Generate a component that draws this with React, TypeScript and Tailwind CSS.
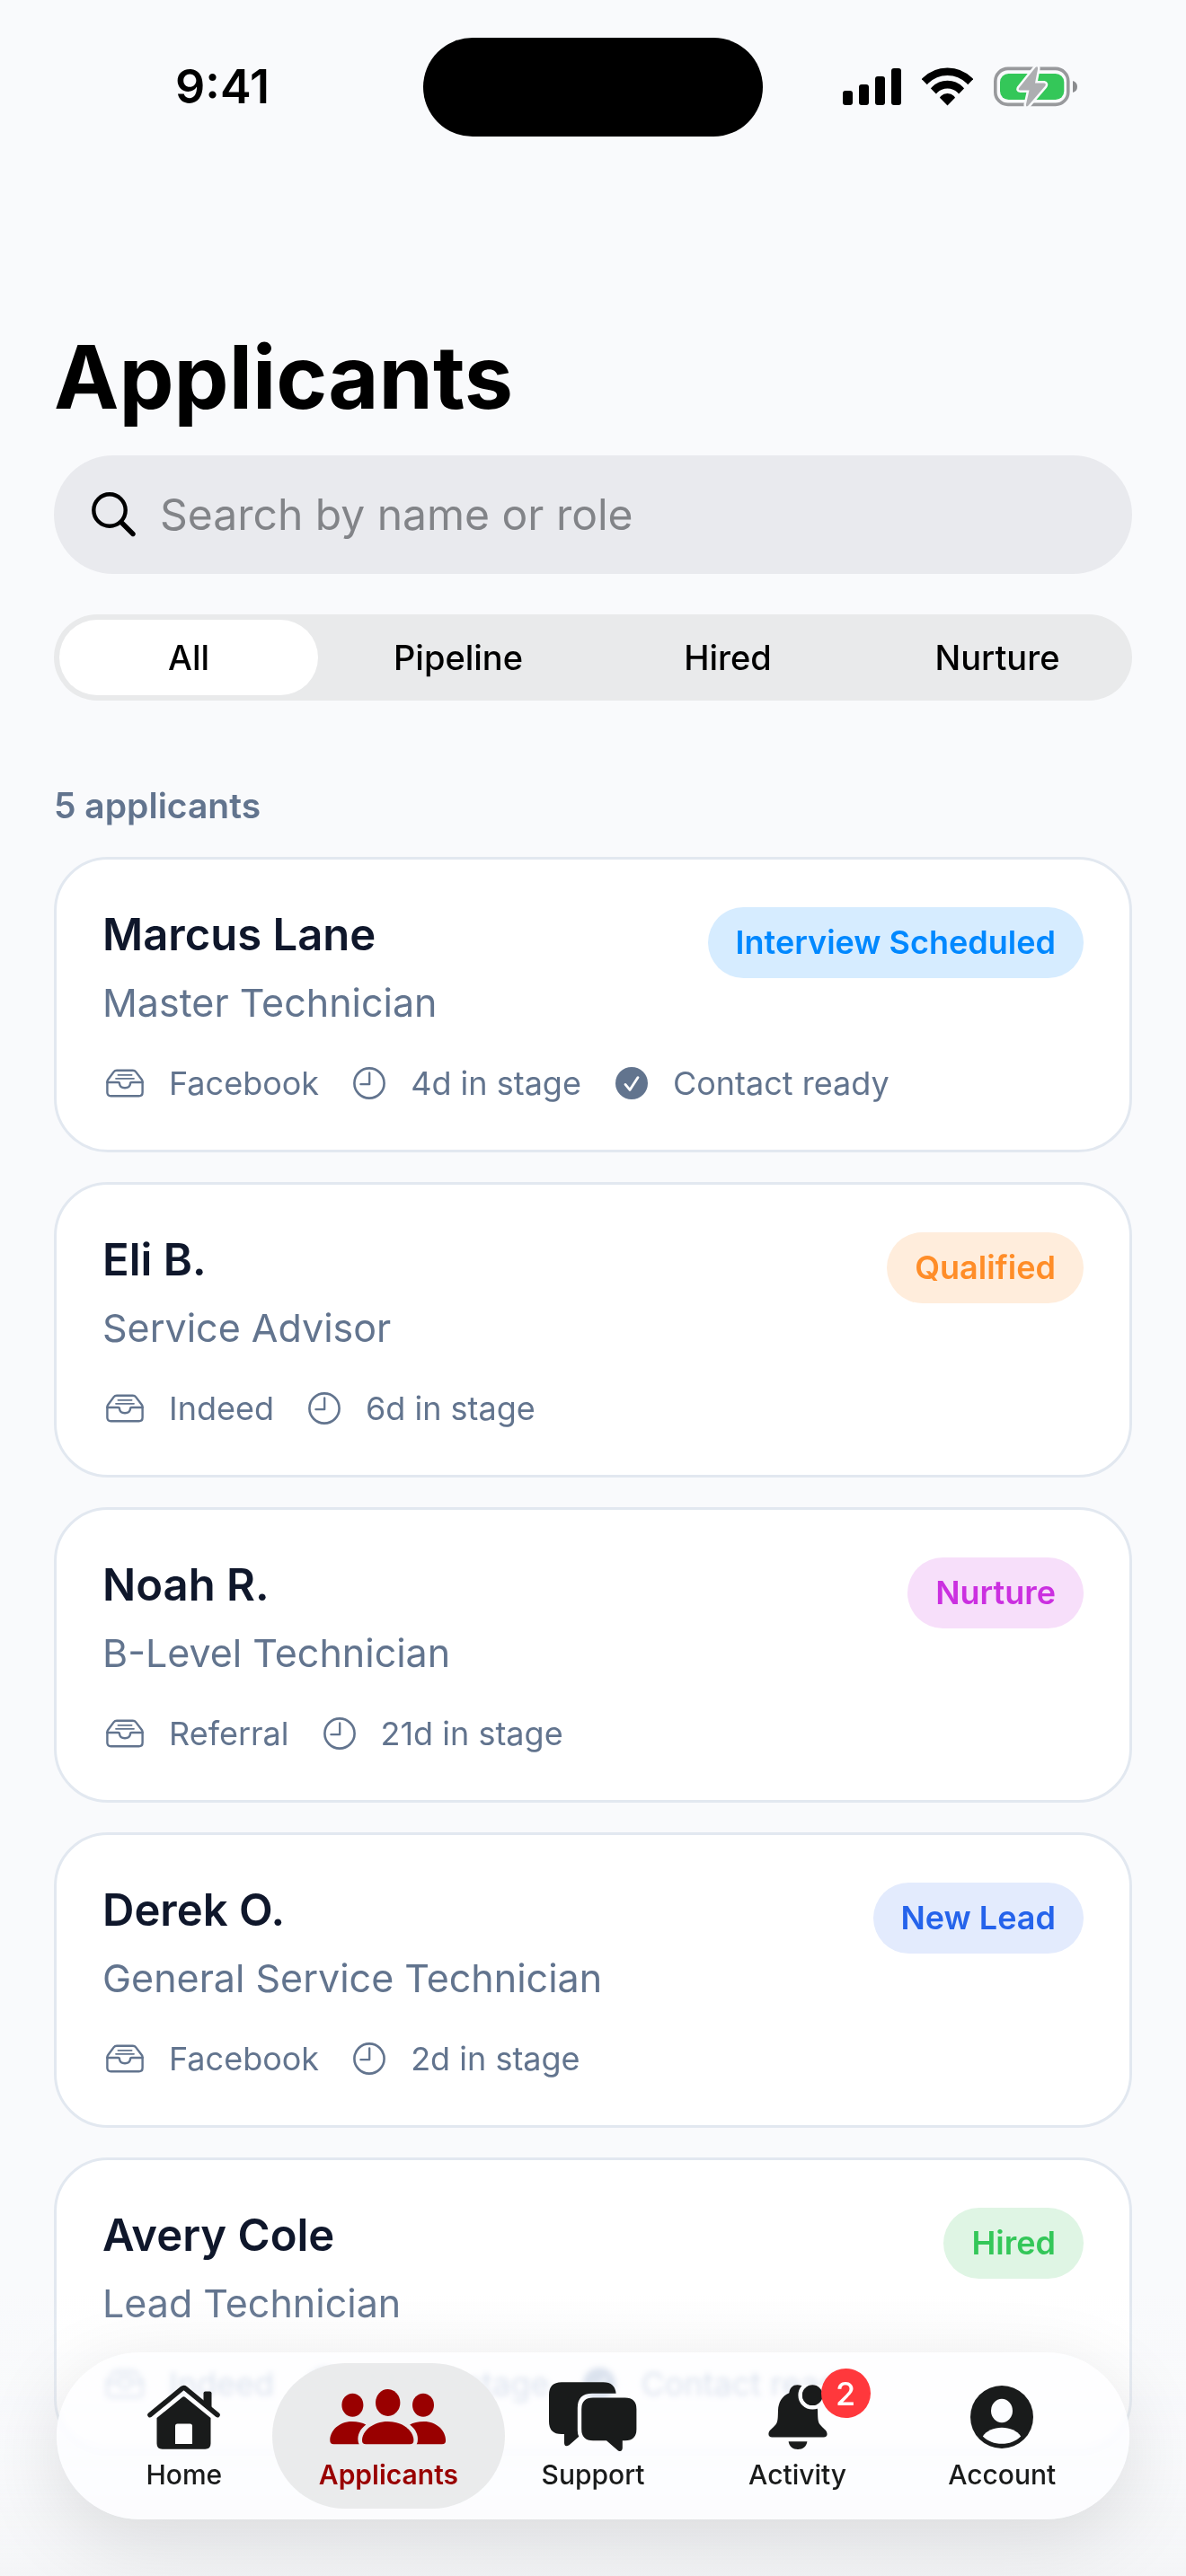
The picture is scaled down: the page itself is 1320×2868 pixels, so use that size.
import { useState, type ReactNode } from "react";
import clsx from "clsx";

type Stage = "Interview Scheduled" | "Qualified" | "Nurture" | "New Lead" | "Hired";
type Filter = "All" | "Pipeline" | "Hired" | "Nurture";

type Applicant = {
  name: string;
  role: string;
  source: string;
  days: number;
  stage: Stage;
  contactReady?: boolean;
};

const FILTERS: Filter[] = ["All", "Pipeline", "Hired", "Nurture"];

const APPLICANTS: Applicant[] = [
  { name: "Marcus Lane", role: "Master Technician", source: "Facebook", days: 4, stage: "Interview Scheduled", contactReady: true },
  { name: "Eli B.", role: "Service Advisor", source: "Indeed", days: 6, stage: "Qualified" },
  { name: "Noah R.", role: "B-Level Technician", source: "Referral", days: 21, stage: "Nurture" },
  { name: "Derek O.", role: "General Service Technician", source: "Facebook", days: 2, stage: "New Lead" },
  { name: "Avery Cole", role: "Lead Technician", source: "Indeed", days: 14, stage: "Hired", contactReady: true },
];

const STAGE_STYLE: Record<Stage, string> = {
  "Interview Scheduled": "bg-[#d6ecff] text-[#0088ff]",
  Qualified: "bg-[#ffeddc] text-[#ff8d28]",
  Nurture: "bg-[#f7dffa] text-[#cb30e0]",
  "New Lead": "bg-[#e3ebfd] text-[#2563eb]",
  Hired: "bg-[#dff5e4] text-[#34c759]",
};

function inFilter(a: Applicant, filter: Filter) {
  if (filter === "All") return true;
  if (filter === "Pipeline") return a.stage !== "Hired" && a.stage !== "Nurture";
  return a.stage === filter;
}

export default function App() {
  const [query, setQuery] = useState("");
  const [filter, setFilter] = useState<Filter>("All");

  const q = query.trim().toLowerCase();
  const visible = APPLICANTS.filter(
    (a) => inFilter(a, filter) && `${a.name} ${a.role}`.toLowerCase().includes(q)
  );

  return (
    <div className="min-h-screen bg-[#f9fafc] pb-32 font-['Inter',sans-serif] text-black">
      <StatusBar />

      <main className="px-[60px] pt-[208px]">
        <h1 className="text-[97px] leading-[120px] font-bold">Applicants</h1>

        <label className="mt-[27px] flex h-[132px] items-center gap-[26px] rounded-full bg-[#e9eaee] px-[42px]">
          <SearchIcon />
          <input
            type="search"
            aria-label="Search applicants"
            placeholder="Search by name or role"
            value={query}
            onChange={(e) => setQuery(e.target.value)}
            className="min-w-0 flex-1 bg-transparent text-[48px] leading-[60px] outline-none placeholder:text-[#828488]"
          />
        </label>

        <div className="mt-[45px] grid h-24 grid-cols-4 rounded-full bg-[#e9eaeb]">
          {FILTERS.map((f) => (
            <button
              key={f}
              type="button"
              aria-pressed={f === filter}
              onClick={() => setFilter(f)}
              className={clsx(
                "m-1.5 rounded-full text-[38px] leading-[48px] font-medium",
                f === filter && "bg-white"
              )}
            >
              {f}
            </button>
          ))}
        </div>

        <p className="mt-[93px] text-[39px] leading-[48px] font-semibold text-slate-500">
          {visible.length} applicants
        </p>

        <ul className="mt-[33px] flex flex-col gap-[33px]">
          {visible.map((a) => (
            <ApplicantCard key={a.name} applicant={a} />
          ))}
        </ul>
      </main>

      {/* Fades the list out behind the tab bar */}
      <div className="pointer-events-none fixed inset-x-0 bottom-0 h-[320px] bg-linear-to-b from-[#f9fafc]/0 via-[#f9fafc]/40 via-60% to-[#f4f5f7]" />
      <TabBar />
    </div>
  );
}

function StatusBar() {
  return (
    <header className="grid grid-cols-[1fr_auto_1fr] items-center pt-[42px]">
      <span className="pl-6 text-center text-[52px] leading-[60px] font-semibold">9:41</span>
      <span className="h-[110px] w-[378px] rounded-full bg-black" />
      <div className="flex items-center justify-center gap-[23px] pr-8">
        <svg className="h-[44px] w-[65px]" viewBox="0 0 65 44" aria-hidden>
          <rect x="0" y="26" width="11" height="16" rx="3" />
          <rect x="18" y="19" width="11" height="23" rx="3" />
          <rect x="36" y="10" width="11" height="32" rx="3" />
          <rect x="54" y="1" width="11" height="41" rx="3" />
        </svg>
        <svg className="h-[44px] w-[57px]" viewBox="0 0 57 44" fill="none" aria-hidden>
          <clipPath id="wifi-wedge">
            <path d="M28.5 42.5 L-8 5 V-5 H65 V5Z" />
          </clipPath>
          <g clipPath="url(#wifi-wedge)" stroke="#000" strokeWidth="8.6">
            <circle cx="28.5" cy="39.3" r="34.6" />
            <circle cx="28.5" cy="39.3" r="20.2" />
            <circle cx="28.5" cy="39.3" r="10.4" fill="#000" stroke="none" />
          </g>
        </svg>
        <svg className="h-[46px] w-[93px]" viewBox="0 0 93 46" aria-hidden>
          <rect x="1.8" y="2.4" width="81" height="40" rx="14" fill="none" stroke="#98999c" strokeWidth="3.6" />
          <rect x="7" y="8" width="71.3" height="29" rx="9.5" fill="#34c759" />
          <path d="M88 16 Q93 17.5 93 22.5 T88 29Z" fill="#8a8b8e" />
          <path
            d="M46.5 1 Q49.5 -1 49 3 L46 18.5 H56 Q59 19 57 22 L38.5 43.5 Q35.5 46 36 42 L39.5 26.5 H29.5 Q26.5 26.5 28.5 23.5Z"
            fill="#adaeb1"
            stroke="#f9fafc"
            strokeWidth="5"
            strokeLinejoin="round"
            paintOrder="stroke"
          />
        </svg>
      </div>
    </header>
  );
}

function ApplicantCard({ applicant }: { applicant: Applicant }) {
  const { name, role, source, days, stage, contactReady } = applicant;
  return (
    <li className="rounded-[60px] border-[3px] border-slate-200 bg-white px-[51px] pt-[53px] pb-[52px]">
      <div className="flex items-start justify-between">
        <div>
          <h2 className="text-[49px] leading-[62px] font-semibold text-slate-900">{name}</h2>
          <p className="mt-[17px] text-[43px] leading-[54px] text-slate-500">{role}</p>
        </div>
        <span
          className={clsx(
            "rounded-full px-[31px] py-[17px] text-[36px] leading-[45px] font-semibold",
            STAGE_STYLE[stage]
          )}
        >
          {stage}
        </span>
      </div>
      <div className="mt-[41px] flex gap-[38px] text-[36px] leading-[44px] text-slate-500">
        <Meta icon={<TrayIcon />}>{source}</Meta>
        <Meta icon={<ClockIcon />}>{days}d in stage</Meta>
        {contactReady && <Meta icon={<CheckIcon />}>Contact ready</Meta>}
      </div>
    </li>
  );
}

function Meta({ icon, children }: { icon: ReactNode; children: ReactNode }) {
  return (
    <span className="flex items-center gap-7">
      {icon}
      <span>{children}</span>
    </span>
  );
}

function TabBar() {
  return (
    <nav className="fixed inset-x-[63px] bottom-[63px] grid h-[186px] grid-cols-5 rounded-full bg-[#fdfeff]/75 px-7 shadow-[0_24px_90px_rgba(0,0,0,0.12)] backdrop-blur-[3px] backdrop-saturate-200">
      <Tab label="Home" icon={<HomeIcon />} />
      <Tab label="Applicants" icon={<PeopleIcon />} active />
      <Tab label="Support" icon={<ChatIcon />} />
      <Tab label="Activity" icon={<BellIcon />} badge={2} />
      <Tab label="Account" icon={<AccountIcon />} />
    </nav>
  );
}

function Tab({
  label,
  icon,
  active,
  badge,
}: {
  label: string;
  icon: ReactNode;
  active?: boolean;
  badge?: number;
}) {
  return (
    <a
      href={`#${label.toLowerCase()}`}
      aria-current={active ? "page" : undefined}
      className={clsx(
        "-mx-4 my-3 flex flex-col items-center gap-1 rounded-full pt-[18px] text-[30px] leading-9",
        active ? "bg-[#e9eaeb]/95 font-semibold text-[#990000]" : "font-medium text-[#191b1b]"
      )}
    >
      <span className="relative flex h-[84px] items-center">
        {icon}
        {badge && (
          <span className="absolute -top-3 -right-12 flex size-[55px] items-center justify-center rounded-full bg-[#ff383c] text-[36px] leading-none text-white">
            {badge}
          </span>
        )}
      </span>
      <span>{label}</span>
    </a>
  );
}

function SearchIcon() {
  return (
    <svg className="h-[50px] w-[50px] shrink-0" viewBox="0 0 50 50" fill="none" stroke="#000" aria-hidden>
      <circle cx="20" cy="20" r="17.7" strokeWidth="4.4" />
      <path d="M33 33.5 L46 46.5" strokeWidth="5.4" strokeLinecap="round" />
    </svg>
  );
}

function TrayIcon() {
  return (
    <svg
      className="h-8 w-[46px]"
      viewBox="-4 0 46 32"
      fill="none"
      stroke="currentColor"
      strokeWidth="2.4"
      strokeLinecap="round"
      strokeLinejoin="round"
      aria-hidden
    >
      <path d="M1.4 15 Q1.2 13.4 2.4 11.8 L8.6 3.4 Q9.8 1.8 12 1.8 H29.8 Q32 1.8 33.2 3.4 L39.6 11.8 Q40.8 13.4 40.6 15 V26.2 Q40.6 30.2 36.6 30.2 H5.4 Q1.4 30.2 1.4 26.2Z" />
      <path d="M1.4 15 H13.4 Q15 15 15 16.6 Q15.6 21.2 21 21.2 Q26.4 21.2 27 16.6 Q27 15 28.6 15 H40.6" />
      <path d="M13.4 6.8 H28.6 M11 10.8 H31" strokeWidth="1.8" />
    </svg>
  );
}

function ClockIcon() {
  return (
    <svg className="size-9" viewBox="0 0 36 36" fill="none" stroke="currentColor" strokeWidth="2.6" aria-hidden>
      <circle cx="18" cy="18" r="16.6" />
      <path d="M18.2 6.4 V19.2 H8.4" strokeWidth="2.3" strokeLinecap="round" strokeLinejoin="round" />
    </svg>
  );
}

function CheckIcon() {
  return (
    <svg className="size-9" viewBox="0 0 36 36" fill="none" aria-hidden>
      <circle cx="18" cy="18" r="18" fill="currentColor" />
      <path d="M11 19.4 L16 25.4 L25 11.6" stroke="#fff" strokeWidth="2.8" strokeLinecap="round" strokeLinejoin="round" />
    </svg>
  );
}

function HomeIcon() {
  return (
    <svg className="h-[72px] w-[81px]" viewBox="0 0 81 72" fill="currentColor" aria-hidden>
      <path
        d="M3 33.6 L38.5 4.4 Q40.5 2.8 42.5 4.4 L78 33.6"
        fill="none"
        stroke="currentColor"
        strokeWidth="5.6"
        strokeLinecap="round"
        strokeLinejoin="round"
      />
      <path d="M62.5 19 V9.5 Q62.5 7.5 64.5 7.5 H69.5 Q71.5 7.5 71.5 9.5 V27.5Z" />
      <path
        fillRule="evenodd"
        d="M10.5 37 L38.8 14 Q40.5 12.7 42.2 14 L70.5 37 V65.5 Q70.5 71.7 64.3 71.7 H16.7 Q10.5 71.7 10.5 65.5Z M31 46 V66 H50 V46 Q50 43.5 47.5 43.5 H33.5 Q31 43.5 31 46Z"
      />
    </svg>
  );
}

function PeopleIcon() {
  const side =
    "M4.4 61.3 Q.3 61.3 .3 57 C.3 46.5 10 36 24.7 36 C31 36 36.5 37.4 40.3 39.6 C33.8 44.4 30.6 51 31.6 58 Q31.8 60 32.7 61.3Z";
  return (
    <svg className="h-[62px] w-[130px]" viewBox="0 0 130 62" fill="currentColor" aria-hidden>
      <ellipse cx="64.7" cy="15" rx="13.7" ry="15" />
      <ellipse cx="25.4" cy="17.8" rx="12" ry="13" />
      <ellipse cx="104" cy="17.8" rx="12" ry="13" />
      <path d="M40.2 61.3 Q36 61.3 36 57 C36 46.5 48 36 64.7 36 C81.4 36 93.4 46.5 93.4 57 Q93.4 61.3 89.2 61.3Z" />
      <path d={side} />
      <path d={side} transform="translate(129.4 0) scale(-1 1)" />
    </svg>
  );
}

function ChatIcon() {
  return (
    <svg className="h-[78px] w-[98px]" viewBox="0 0 98 78" fill="currentColor" aria-hidden>
      <path d="M14 .2 H60.5 Q73.5 .2 74.6 12.8 H48 Q31.8 12.8 31.8 29 V54 Q31.8 58 33.3 60.8 L22.5 70.2 Q17 73 17 67.5 V58 H14 Q0 58 0 44 V14.2 Q0 .2 14 .2Z" />
      <path d="M49 17.4 H84.6 Q97.4 17.4 97.4 30.2 V52.4 Q97.4 65.2 84.6 65.2 H81.8 V73.6 Q81.4 78.4 77 76.4 L64 65.2 H49 Q36.2 65.2 36.2 52.4 V30.2 Q36.2 17.4 49 17.4Z" />
    </svg>
  );
}

function BellIcon() {
  return (
    <svg className="h-[72px] w-[66px]" viewBox="0 0 66 72" fill="currentColor" aria-hidden>
      <path d="M23.3 9.3 C24 3.6 27 .2 32.5 .2 C39 .2 42 4 43 9.3 C51 13 54.6 20 55 28.5 C55.3 36 55 41 57.5 44.2 C61 48.6 65.6 50.6 65.6 55 Q65.6 58.4 61.6 58.4 H4.4 Q.4 58.4 .4 55 C.4 50.6 5 48.6 8.5 44.2 C11 41 10.7 36 11 28.5 C11.4 20 15 13 23.3 9.3Z" />
      <path d="M22.6 63.3 H43.4 C42.6 69 38.6 72 33 72 S23.4 69 22.6 63.3Z" />
      <circle cx="49.3" cy="11.7" r="13.6" fill="none" stroke="#fcfdff" strokeWidth="4.6" />
      <circle cx="49.3" cy="11.7" r="11.4" />
    </svg>
  );
}

function AccountIcon() {
  return (
    <svg className="size-[70px]" viewBox="0 0 70 70" aria-hidden>
      <circle cx="35" cy="35" r="35" fill="currentColor" />
      <ellipse cx="35" cy="28" rx="12" ry="13.2" fill="#fcfdff" />
      <path d="M13.8 56.4 C18 50.4 26 46.8 35 46.8 S52 50.4 56.2 56.4 C50.4 62 43.4 64.8 35 64.8 S19.6 62 13.8 56.4Z" fill="#fcfdff" />
    </svg>
  );
}
